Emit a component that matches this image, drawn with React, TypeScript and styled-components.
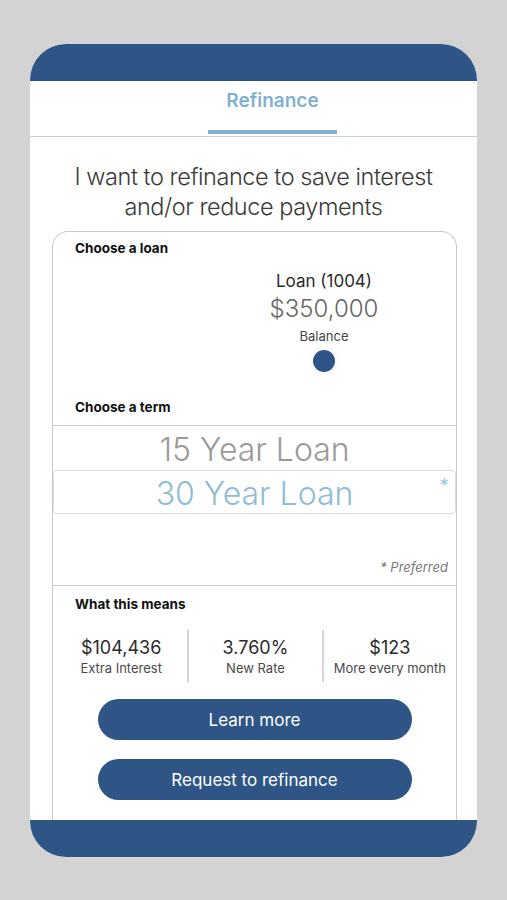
import React from "react";
import styled, { createGlobalStyle } from "styled-components";

const Global = createGlobalStyle`
  html, body { margin: 0; padding: 0; background: #d4d3d4; }
  body { font-family: Inter, "Open Sans", "Liberation Sans", sans-serif; }
  * { box-sizing: border-box; }
`;

const BLUE = "#2e5585";
const LIGHT = "#7fb1d0";

const Page = styled.div`
  width: 507px;
  height: 900px;
  padding: 44px 30px 0 30px;
`;

const Phone = styled.div`
  width: 447px;
  height: 813px;
  display: flex;
  flex-direction: column;
  background: #fff;
  border-radius: 36px;
  overflow: hidden;
`;

const Bar = styled.div`
  flex: 0 0 37px;
  background: ${BLUE};
`;

const Header = styled.div`
  flex: 0 0 56px;
  display: flex;
  justify-content: center;
  border-bottom: 1px solid #cfcfcf;
  padding-left: 38px;
`;

const Tab = styled.div`
  width: 129px;
  display: flex;
  flex-direction: column;
  align-items: center;
  justify-content: space-between;
  padding-top: 8px;
  font-size: 19px;
  font-weight: 600;
  color: ${LIGHT};
  &::after {
    content: "";
    display: block;
    width: 129px;
    height: 4px;
    margin-bottom: 2px;
    background: ${LIGHT};
  }
`;

const Content = styled.div`
  flex: 1;
  overflow: hidden;
  padding-top: 25px;
`;

const Title = styled.h1`
  margin: 0 0 9px;
  font-size: 23.5px;
  line-height: 30px;
  font-weight: 300;
  letter-spacing: -0.45px;
  color: #3a3a3a;
  text-align: center;
`;

const Card = styled.div`
  margin-left: 22px;
  width: 405px;
  border: 1px solid #c9c9c9;
  border-bottom: none;
  border-radius: 16px 16px 0 0;
  padding-bottom: 40px;
`;

const SectionLabel = styled.div<{ $top: number }>`
  padding: ${(p) => p.$top}px 0 0 22px;
  font-size: 13.5px;
  line-height: 16px;
  font-weight: 700;
  color: #111;
`;

const LoanRow = styled.div`
  display: flex;
  padding-left: 201px;
  padding-top: 14px;
`;

const LoanItem = styled.div`
  width: 140px;
  display: flex;
  flex-direction: column;
  align-items: center;
`;

const LoanName = styled.div`
  font-size: 17px;
  line-height: 22px;
  color: #2a2a2a;
`;

const LoanAmount = styled.div`
  font-size: 24px;
  line-height: 32px;
  font-weight: 300;
  color: #666;
  margin-top: 1px;
`;

const LoanSub = styled.div`
  font-size: 13px;
  line-height: 18px;
  color: #444;
  margin-top: 2px;
`;

const Dot = styled.div`
  width: 22px;
  height: 22px;
  margin-top: 5px;
  border-radius: 50%;
  background: ${BLUE};
  box-shadow: 0 0 0 2px #fff, 0 0 3px 2px rgba(0, 0, 0, 0.08);
`;

const Picker = styled.div`
  margin-top: 10px;
  border-top: 1px solid #cfcfcf;
  border-bottom: 1px solid #cfcfcf;
  padding-bottom: 10px;
`;

const TermRow = styled.div<{ $selected?: boolean }>`
  position: relative;
  height: 44px;
  display: flex;
  align-items: center;
  justify-content: center;
  padding-top: 3px;
  font-size: 32px;
  font-weight: 300;
  color: ${(p) => (p.$selected ? "#8fbdd7" : "#9a9a9a")};
  border: 1px solid ${(p) => (p.$selected ? "#dcdcdc" : "transparent")};
  border-radius: ${(p) => (p.$selected ? "4px" : "0")};
`;

const Star = styled.span`
  position: absolute;
  right: 6px;
  top: 3px;
  font-size: 19px;
  font-weight: 300;
  color: #8fbdd7;
`;

const Preferred = styled.div`
  margin-top: 45px;
  padding-right: 8px;
  text-align: right;
  font-size: 13px;
  font-style: italic;
  color: #777;
`;

const Stats = styled.div`
  display: grid;
  grid-template-columns: repeat(3, 1fr);
  margin-top: 18px;
`;

const Stat = styled.div<{ $divider?: boolean }>`
  height: 52px;
  display: flex;
  flex-direction: column;
  align-items: center;
  justify-content: center;
  border-left: 2px solid ${(p) => (p.$divider ? "#d5d5d5" : "transparent")};
`;

const StatValue = styled.div`
  font-size: 18px;
  line-height: 22px;
  color: #2b2b2b;
  margin-top: 2px;
`;

const StatLabel = styled.div`
  font-size: 13px;
  line-height: 18px;
  color: #4a4a4a;
`;

const Buttons = styled.div`
  display: flex;
  flex-direction: column;
  align-items: center;
  gap: 19px;
  margin-top: 17px;
`;

const Button = styled.button`
  width: 314px;
  height: 41px;
  border: none;
  border-radius: 21px;
  background: ${BLUE};
  color: #fff;
  font-family: inherit;
  font-size: 17px;
  font-weight: 400;
`;

export default function App() {
  return (
    <Page>
      <Global />
      <Phone>
        <Bar />
        <Header>
          <Tab>Refinance</Tab>
        </Header>
        <Content>
          <Title>
            I want to refinance to save interest
            <br />
            and/or reduce payments
          </Title>
          <Card>
            <SectionLabel $top={8}>Choose a loan</SectionLabel>
            <LoanRow>
              <LoanItem>
                <LoanName>Loan (1004)</LoanName>
                <LoanAmount>$350,000</LoanAmount>
                <LoanSub>Balance</LoanSub>
                <Dot />
              </LoanItem>
            </LoanRow>
            <SectionLabel $top={27}>Choose a term</SectionLabel>
            <Picker>
              <TermRow>15 Year Loan</TermRow>
              <TermRow $selected>
                30 Year Loan<Star>*</Star>
              </TermRow>
              <Preferred>* Preferred</Preferred>
            </Picker>
            <SectionLabel $top={10}>What this means</SectionLabel>
            <Stats>
              <Stat>
                <StatValue>$104,436</StatValue>
                <StatLabel>Extra Interest</StatLabel>
              </Stat>
              <Stat $divider>
                <StatValue>3.760%</StatValue>
                <StatLabel>New Rate</StatLabel>
              </Stat>
              <Stat $divider>
                <StatValue>$123</StatValue>
                <StatLabel>More every month</StatLabel>
              </Stat>
            </Stats>
            <Buttons>
              <Button>Learn more</Button>
              <Button>Request to refinance</Button>
            </Buttons>
          </Card>
        </Content>
        <Bar />
      </Phone>
    </Page>
  );
}
